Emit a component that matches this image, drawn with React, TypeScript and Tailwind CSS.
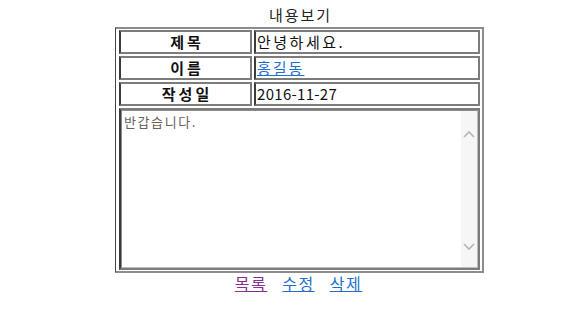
import React from "react";

const ko = { fontFamily: '"Noto Sans CJK KR", "Noto Sans", sans-serif' };

function Row({ label, children }: { label: string; children: React.ReactNode }) {
  return (
    <div className="flex gap-[2px] h-[24px]">
      <div className="w-[133px] flex items-center justify-center border-2 border-[#7c7c7c] border-l-[#3c3c3c] font-bold text-[15px] text-[#111] tracking-[3px] pl-[3px]">
        {label}
      </div>
      <div className="w-[226px] flex items-center pl-[1px] border-2 border-[#7c7c7c] border-l-[#3c3c3c] text-[15px] text-[#111]">
        {children}
      </div>
    </div>
  );
}

export default function App() {
  return (
    <div className="w-[587px] h-[330px] bg-white pl-[12px] flex flex-col items-center" style={ko}>
      <div className="h-[27px] flex items-center pt-[4px] pl-[2px] text-[15px] text-[#222] tracking-[2px]">내용보기</div>
      <div className="w-[369px] border-t-2 border-r-2 border-b-2 border-l border-[#8c8c8c] border-l-[#444] pl-[3px] pr-[2px] py-[1px] flex flex-col gap-[2px]">
        <Row label="제목">
          <span className="tracking-[2.5px]">안녕하세요.</span>
        </Row>
        <Row label="이름">
          <a href="#" className="text-[#1f6fd1] underline tracking-[2px]">홍길동</a>
        </Row>
        <Row label="작성일">
          <span className="tracking-[0.3px]">2016-11-27</span>
        </Row>
        <div className="h-[162px] border-2 border-[#7c7c7c] border-l-[#3c3c3c] flex">
          <div className="flex-1 flex border border-[#8a8a8a] border-b-[#bdbdbd] border-r-[#bdbdbd]">
            <div className="flex-1 pl-[2px] pt-[3px] text-[13px] leading-[16px] text-[#6a5e55] tracking-[1.6px]">반갑습니다.</div>
            <div className="w-[16px] bg-[#f6f6f6] flex flex-col items-center justify-between pt-[19px] pb-[16px]">
              <svg width="12" height="8" viewBox="0 0 12 8">
                <path d="M1 7 L6 2 L11 7" fill="none" stroke="#b5b5b5" strokeWidth="1.6" />
              </svg>
              <svg width="12" height="8" viewBox="0 0 12 8">
                <path d="M1 1 L6 6 L11 1" fill="none" stroke="#b5b5b5" strokeWidth="1.6" />
              </svg>
            </div>
          </div>
        </div>
      </div>
      <div className="flex gap-[15px] h-[20px] items-center text-[16px] tracking-[1.5px] pr-[2px]">
        <a href="#" className="text-[#8b2f8f] underline">목록</a>
        <a href="#" className="text-[#1f6fd1] underline">수정</a>
        <a href="#" className="text-[#1f6fd1] underline">삭제</a>
      </div>
    </div>
  );
}
